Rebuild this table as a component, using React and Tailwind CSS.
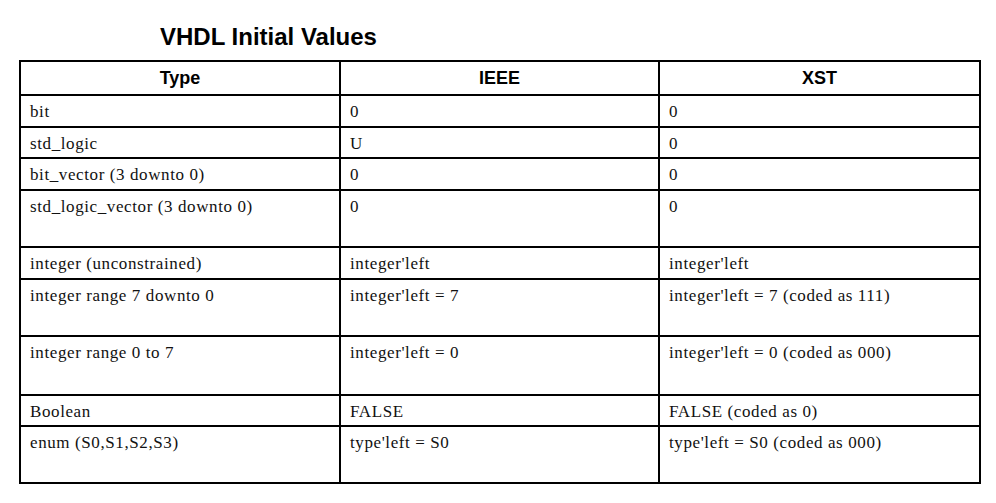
import React from 'react';

const rows = [
  { h: 'h-[32px]', cells: ['bit', '0', '0'] },
  { h: 'h-[31px]', cells: ['std_logic', 'U', '0'] },
  { h: 'h-[32px]', cells: ['bit_vector (3 downto 0)', '0', '0'] },
  { h: 'h-[57px]', cells: ['std_logic_vector (3 downto 0)', '0', '0'] },
  { h: 'h-[32px]', cells: ['integer (unconstrained)', "integer'left", "integer'left"] },
  { h: 'h-[57px]', cells: ['integer range 7 downto 0', "integer'left = 7", "integer'left = 7 (coded as 111)"] },
  { h: 'h-[59px]', cells: ['integer range 0 to 7', "integer'left = 0", "integer'left = 0 (coded as 000)"] },
  { h: 'h-[31px]', cells: ['Boolean', 'FALSE', 'FALSE (coded as 0)'] },
  { h: 'h-[57px]', cells: ['enum (S0,S1,S2,S3)', "type'left = S0", "type'left = S0 (coded as 000)"] },
];

const widths = ['w-[320px]', 'w-[319px]', 'w-[321px]'];

export default function App() {
  return (
    <div className="w-[996px] h-[503px] bg-white overflow-hidden">
      {/* Title */}
      <h1 className="pl-[160px] pt-[23px] leading-[28px] text-[24px] font-bold text-black font-['Liberation_Sans',Arial,sans-serif]">
        VHDL Initial Values
      </h1>

      {/* Table */}
      <div className="ml-[19px] mt-[9px] w-[962px] border-l-2 border-t-2 border-black">
        <div className="flex h-[34px]">
          {['Type', 'IEEE', 'XST'].map((t, i) => (
            <div
              key={t}
              className={`${widths[i]} border-r-2 border-b-2 border-black flex items-center justify-center text-[18px] font-bold text-black font-['Liberation_Sans',Arial,sans-serif]`}
            >
              {t}
            </div>
          ))}
        </div>

        {rows.map((row, r) => (
          <div key={r} className={`flex ${row.h}`}>
            {row.cells.map((c, i) => (
              <div
                key={i}
                className={`${widths[i]} border-r-2 border-b-2 border-black pl-[9px] pt-[5px] text-[17px] leading-[22px] tracking-[0.6px] text-[#111] font-['Liberation_Serif','Times_New_Roman',serif]`}
              >
                {c}
              </div>
            ))}
          </div>
        ))}
      </div>
    </div>
  );
}
